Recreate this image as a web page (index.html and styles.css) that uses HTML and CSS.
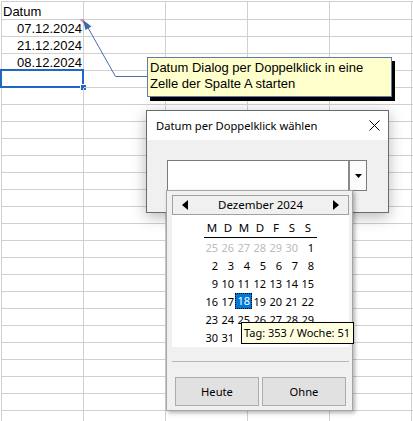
FILE: index.html
```html
<!DOCTYPE html>
<html lang="de">
<head>
<meta charset="utf-8">
<title>Datum Dialog</title>
<link rel="stylesheet" href="styles.css">
</head>
<body>
<div class="sheet">
  <div class="c hdr">Datum</div><div class="c"></div><div class="c"></div><div class="c"></div><div class="c"></div><div class="c"></div>
  <div class="c num note">07.12.2024</div><div class="c"></div><div class="c"></div><div class="c"></div><div class="c"></div><div class="c"></div>
  <div class="c num">21.12.2024</div><div class="c"></div><div class="c"></div><div class="c"></div><div class="c"></div><div class="c"></div>
  <div class="c num">08.12.2024</div><div class="c"></div><div class="c"></div><div class="c"></div><div class="c"></div><div class="c"></div>
  <div class="c sel"></div><div class="c"></div><div class="c"></div><div class="c"></div><div class="c"></div><div class="c"></div>
  <div class="c"></div><div class="c"></div><div class="c"></div><div class="c"></div><div class="c"></div><div class="c"></div>
  <div class="c"></div><div class="c"></div><div class="c"></div><div class="c"></div><div class="c"></div><div class="c"></div>
  <div class="c"></div><div class="c"></div><div class="c"></div><div class="c"></div><div class="c"></div><div class="c"></div>
  <div class="c"></div><div class="c"></div><div class="c"></div><div class="c"></div><div class="c"></div><div class="c"></div>
  <div class="c"></div><div class="c"></div><div class="c"></div><div class="c"></div><div class="c"></div><div class="c"></div>
  <div class="c"></div><div class="c"></div><div class="c"></div><div class="c"></div><div class="c"></div><div class="c"></div>
  <div class="c"></div><div class="c"></div><div class="c"></div><div class="c"></div><div class="c"></div><div class="c"></div>
  <div class="c"></div><div class="c"></div><div class="c"></div><div class="c"></div><div class="c"></div><div class="c"></div>
  <div class="c"></div><div class="c"></div><div class="c"></div><div class="c"></div><div class="c"></div><div class="c"></div>
  <div class="c"></div><div class="c"></div><div class="c"></div><div class="c"></div><div class="c"></div><div class="c"></div>
  <div class="c"></div><div class="c"></div><div class="c"></div><div class="c"></div><div class="c"></div><div class="c"></div>
  <div class="c"></div><div class="c"></div><div class="c"></div><div class="c"></div><div class="c"></div><div class="c"></div>
  <div class="c"></div><div class="c"></div><div class="c"></div><div class="c"></div><div class="c"></div><div class="c"></div>
  <div class="c"></div><div class="c"></div><div class="c"></div><div class="c"></div><div class="c"></div><div class="c"></div>
  <div class="c"></div><div class="c"></div><div class="c"></div><div class="c"></div><div class="c"></div><div class="c"></div>
  <div class="c"></div><div class="c"></div><div class="c"></div><div class="c"></div><div class="c"></div><div class="c"></div>
  <div class="c"></div><div class="c"></div><div class="c"></div><div class="c"></div><div class="c"></div><div class="c"></div>
  <div class="c"></div><div class="c"></div><div class="c"></div><div class="c"></div><div class="c"></div><div class="c"></div>
  <div class="c"></div><div class="c"></div><div class="c"></div><div class="c"></div><div class="c"></div><div class="c"></div>
  <div class="c"></div><div class="c"></div><div class="c"></div><div class="c"></div><div class="c"></div><div class="c"></div>
</div>

<svg class="arrow" width="413" height="421" viewBox="0 0 413 421">
  <polyline points="147,76.5 115.5,76.5 87,26" fill="none" stroke="#4a6ea8" stroke-width="1"/>
  <polygon points="83,20 91.5,26.5 85.5,30" fill="#3f67a8"/>
</svg>

<div class="comment">Datum Dialog per Doppelklick in eine<br>Zelle der Spalte A starten</div>

<div class="dialog">
  <div class="titlebar">
    <span class="title">Datum per Doppelklick wählen</span>
    <svg class="close" width="11" height="11" viewBox="0 0 11 11"><path d="M0.5 0.5 L10.5 10.5 M10.5 0.5 L0.5 10.5" stroke="#000" stroke-width="1" fill="none"/></svg>
  </div>
  <div class="dbody">
    <div class="combo">
      <div class="combo-field"></div>
      <div class="combo-btn"><svg width="7" height="4" viewBox="0 0 7 4"><polygon points="0,0 7,0 3.5,4" fill="#000"/></svg></div>
    </div>
  </div>
</div>

<div class="popup">
  <div class="cal-head">
    <svg width="6" height="10" viewBox="0 0 6 10"><polygon points="6,0 6,10 0,5" fill="#000"/></svg>
    <span class="month">Dezember 2024</span>
    <svg width="6" height="10" viewBox="0 0 6 10"><polygon points="0,0 0,10 6,5" fill="#000"/></svg>
  </div>
  <div class="cal-body">
    <div class="dow"><span>M</span><span>D</span><span>M</span><span>D</span><span>F</span><span>S</span><span>S</span></div>
    <div class="days">
      <span class="o">25</span><span class="o">26</span><span class="o">27</span><span class="o">28</span><span class="o">29</span><span class="o">30</span><span>1</span>
      <span>2</span><span>3</span><span>4</span><span>5</span><span>6</span><span>7</span><span>8</span>
      <span>9</span><span>10</span><span>11</span><span>12</span><span>13</span><span>14</span><span>15</span>
      <span>16</span><span>17</span><span><b class="today">18</b></span><span>19</span><span>20</span><span>21</span><span>22</span>
      <span>23</span><span>24</span><span>25</span><span>26</span><span>27</span><span>28</span><span>29</span>
      <span>30</span><span>31</span>
    </div>
  </div>
  <div class="sep"></div>
  <div class="btns"><button class="btn">Heute</button><button class="btn">Ohne</button></div>
</div>

<div class="tip">Tag: 353 / Woche: 51</div>
</body>
</html>
```

FILE: styles.css
```css
html, body {
  margin: 0;
  padding: 0;
}
body {
  width: 413px;
  height: 421px;
  overflow: hidden;
  position: relative;
  background: #ffffff;
  font-family: "Liberation Sans", Arial, sans-serif;
  color: #000;
}

/* spreadsheet grid */
.sheet {
  display: grid;
  grid-template-columns: repeat(5, 82px) 1px;
  grid-template-rows: 18px repeat(23, 17px) 10px;
  width: max-content;
  margin: 1px 0 0 1px;
  border-top: 1px solid #d0d0d0;
  border-left: 1px solid #d0d0d0;
}
.c {
  box-sizing: border-box;
  border-right: 1px solid #d0d0d0;
  border-bottom: 1px solid #d0d0d0;
  font-size: 13px;
  line-height: 16px;
  padding: 1px 1px 0 1px;
  white-space: nowrap;
  position: relative;
}
.c:nth-child(6n) {
  border-right: 0;
  padding: 0;
}
.c:nth-last-child(-n+6) {
  border-bottom: 0;
}
.hdr { padding-top: 2px; }
.num { text-align: right; }
.note::after {
  content: "";
  position: absolute;
  right: -1px;
  top: -1px;
  border-top: 5px solid #d597a9;
  border-left: 5px solid transparent;
}
.sel::before {
  content: "";
  position: absolute;
  left: -2px;
  top: -2px;
  right: -1px;
  bottom: -1px;
  border: 2px solid #1f66c6;
}
.sel::after {
  content: "";
  position: absolute;
  right: -3px;
  bottom: -3px;
  width: 5px;
  height: 5px;
  background: #1f66c6;
  border-left: 1px solid #fff;
  border-top: 1px solid #fff;
}

/* comment connector */
.arrow {
  position: absolute;
  left: 0;
  top: 0;
  pointer-events: none;
}
.comment {
  position: absolute;
  left: 147px;
  top: 57px;
  width: 245px;
  height: 40px;
  box-sizing: border-box;
  border: 1px solid #5b7cb1;
  background: #ffffcc;
  box-shadow: 3px 4px 0 #000;
  font-size: 13px;
  line-height: 16px;
  padding: 2px 2px;
  white-space: nowrap;
}

/* dialog */
.dialog {
  position: absolute;
  left: 146px;
  top: 110px;
  width: 243px;
  height: 103px;
  box-sizing: border-box;
  border: 1px solid #6b6b6b;
  background: #f0f0f0;
  box-shadow: 0 4px 14px rgba(0, 0, 0, 0.28);
  font-family: "Noto Sans", sans-serif;
}
.titlebar {
  height: 29px;
  background: #fff;
  display: flex;
  align-items: center;
  padding: 0 8px 0 9px;
}
.title {
  font-size: 11.2px;
  color: #000;
}
.close {
  margin-left: auto;
}
.dbody {
  padding: 20px 0 0 20px;
}
.combo {
  width: 200px;
  height: 31px;
  box-sizing: border-box;
  border: 1px solid #7a7a7a;
  background: #fff;
  display: flex;
}
.combo-field {
  flex: 1;
}
.combo-btn {
  width: 16px;
  border-left: 2px solid #8a8a8a;
  display: flex;
  align-items: center;
  justify-content: center;
  background: #fbfbfb;
}

/* calendar popup */
.popup {
  position: absolute;
  left: 166px;
  top: 190px;
  width: 187px;
  height: 221px;
  box-sizing: border-box;
  border: 1px solid #a5a5a5;
  background: #f0f0f0;
  box-shadow: 2px 2px 4px rgba(0, 0, 0, 0.3);
  padding: 4px 3px 0 5px;
  font-family: "Noto Sans", sans-serif;
  font-size: 11px;
}
.cal-head {
  height: 20px;
  box-sizing: border-box;
  border: 1px solid #a0a0a0;
  background: #f0f0f0;
  display: flex;
  align-items: center;
  justify-content: space-between;
  padding: 0 9px 0 9px;
}
.month {
  font-size: 11.5px;
  line-height: 18px;
}
.cal-body {
  height: 132px;
  background: #fff;
  padding-top: 4px;
  box-sizing: border-box;
}
.dow {
  display: grid;
  grid-template-columns: repeat(7, 16px);
  width: 113px;
  margin-left: 32px;
  border-bottom: 1px solid #000;
  height: 18px;
  line-height: 18px;
  text-align: center;
  font-size: 11.5px;
}
.days {
  display: grid;
  grid-template-columns: repeat(7, 16px);
  grid-auto-rows: 18px;
  margin-left: 30px;
  width: 112px;
}
.days span {
  display: flex;
  justify-content: flex-end;
  align-items: center;
}
.days .o {
  color: #bcbcbc;
}
.today {
  font-weight: normal;
  background: #0078d7;
  color: #fff;
  outline: 1px dotted #000;
  outline-offset: -1px;
  height: 16px;
  line-height: 16px;
  padding: 0 2px 0 2px;
  margin-right: -2px;
}
.sep {
  margin-top: 14px;
  border-top: 1px solid #b9b9b9;
  width: 177px;
}
.btns {
  display: flex;
  gap: 3px;
  margin: 15px 0 0 3px;
}
.btn {
  width: 84px;
  height: 29px;
  box-sizing: border-box;
  border: 1px solid #adadad;
  background: #e1e1e1;
  font-family: "Noto Sans", sans-serif;
  font-size: 11.2px;
  color: #000;
  padding: 0;
}

/* tooltip */
.tip {
  position: absolute;
  left: 241px;
  top: 322px;
  width: 113px;
  height: 22px;
  box-sizing: border-box;
  border: 1px solid #000;
  background: #ffffe1;
  font-family: "Noto Sans", sans-serif;
  font-size: 11px;
  line-height: 20px;
  padding-left: 2px;
  white-space: nowrap;
}
```
